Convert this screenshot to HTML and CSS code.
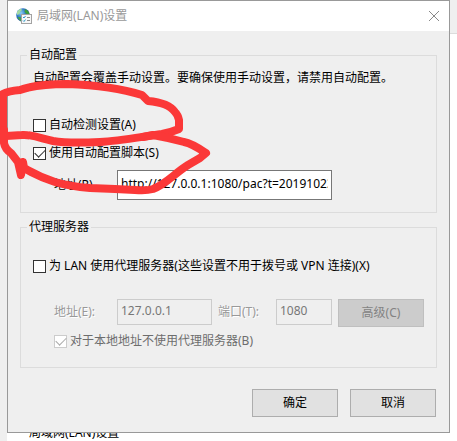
FILE: index.html
```html
<!DOCTYPE html>
<html lang="zh-CN">
  <head>
    <meta charset="UTF-8" />
    <meta name="viewport" content="width=device-width, initial-scale=1.0" />
    <title>局域网(LAN)设置</title>
    <link rel="stylesheet" href="styles.css">
  </head>
  <body>
    <div class="parent-window">
      <span>局域网(LAN)设置</span>
    </div>

    <main class="dialog">
      <header class="titlebar">
        <svg class="app-icon" width="16" height="16" viewBox="0 0 16 16">
          <defs>
            <radialGradient id="globe" cx="35%" cy="35%" r="70%">
              <stop offset="0" stop-color="#8fd0f2" />
              <stop offset="0.5" stop-color="#2f78c4" />
              <stop offset="1" stop-color="#153f86" />
            </radialGradient>
          </defs>
          <circle cx="7" cy="7" r="6.8" fill="url(#globe)" />
          <path d="M1 4 Q2 1.500 5 .8 L6 2 L4 4 L3.500 6 L1 7Z" fill="#a5dba0" />
          <path d="M9 1 Q13 3 13.500 6 L10.500 6 L8.500 4Z" fill="#3d9e3c" />
          <path d="M1.500 9 L4.500 9 L5.500 13.500 Q3 12.500 1.500 9Z" fill="#45a345" />
          <rect x="5.500" y="6.500" width="10" height="9" fill="#f7f7f7" stroke="#a3a3a3" />
          <path d="M7 9 L8 10 L9.500 8 M7 12.500 L8 13.500 L9.500 11.500" fill="none" stroke="#2c9bd0" />
          <path d="M11 9.500 H14 M11 12.500 H14" stroke="#8c8c8c" />
        </svg>
        <h1>局域网(LAN)设置</h1>
        <button class="close" type="button" aria-label="关闭">
          <svg width="12" height="12" viewBox="0 0 12 12">
            <path d="M1 1 L11 11 M11 1 L1 11" stroke="#8a8a8a" fill="none" />
          </svg>
        </button>
      </header>

      <form class="content">
        <fieldset class="group auto-group">
          <legend>自动配置</legend>
          <p>自动配置会覆盖手动设置。要确保使用手动设置，请禁用自动配置。</p>
          <label class="check"><input type="checkbox" />自动检测设置(A)</label>
          <label class="check"><input type="checkbox" checked />使用自动配置脚本(S)</label>
          <div class="row script-row">
            <label class="address-label" for="script-address">地址(R)</label>
            <input class="script-address" type="text" id="script-address" value="http://127.0.0.1:1080/pac?t=20191023" />
          </div>
        </fieldset>

        <fieldset class="group proxy-group">
          <legend>代理服务器</legend>
          <label class="check"><input type="checkbox" />为 LAN 使用代理服务器(这些设置不用于拨号或 VPN 连接)(X)</label>
          <div class="row proxy-row">
            <label class="address-label disabled" for="proxy-address">地址(E):</label>
            <input class="proxy-address" type="text" id="proxy-address" value="127.0.0.1" disabled />
            <label class="port-label disabled" for="proxy-port">端口(T):</label>
            <input class="proxy-port" type="text" id="proxy-port" value="1080" disabled />
            <button class="advanced" type="button" disabled>高级(C)</button>
          </div>
          <label class="check bypass"><input type="checkbox" checked disabled />对于本地地址不使用代理服务器(B)</label>
        </fieldset>

        <div class="actions">
          <button type="submit">确定</button>
          <button type="button">取消</button>
        </div>
      </form>

      <!-- red marker strokes -->
      <svg class="marker" width="220" height="120" viewBox="0 80 220 120">
        <path d="M3 130 L3 94 Q8 91 20 90 C34 85 50 84 67 84 C94 85 120 88 142 95 L148 101 C160 102 170 105 175 112 Q178 115 179 120 L179 129 Q172 132 162 134 C140 137 120 141 100 142 C80 143 65 143 53 141 C40 138 30 134 22 135 L6 136" />
        <path d="M4 130 L4 143 Q5 149 11 153 L18 162 L21 175 L23 162 L24 168 C34 174 43 178 55 182 C65 185 77 187 90 188 L115 189 L135 190 Q146 191 153 189 C166 184 175 173 188 165 L200 158 L206 153 C200 149 190 143 184 142 Q170 138 153 135 L143 137" />
      </svg>
    </main>
  </body>
</html>
```
FILE: styles.css
```css
* {
  box-sizing: border-box;
}

body {
  position: relative;
  min-height: 100vh;
  margin: 0;
  padding: 0 7px;
  background-color: #efefef;
  color: #000;
  font-family: "Noto Sans", "Noto Sans CJK SC", sans-serif;
  font-size: 12px;
  line-height: 16px;
  overflow: hidden;
}

/* window behind the dialog */
.parent-window {
  position: absolute;
  top: 33px;
  right: 0;
  bottom: 0;
  left: 7px;
  display: flex;
  align-items: flex-end;
  padding-left: 22px;
  border-top: 1px solid #dcdcdc;
  background-color: #fff;
}

.dialog {
  position: relative;
  border: 1px solid #999;
  background-color: #efefef;
}

.titlebar {
  display: flex;
  align-items: center;
  height: 30px;
  padding: 0 8px;
  background-color: #fff;
}

.titlebar h1 {
  flex: 1;
  margin: 0 0 0 5px;
  color: #999;
  font-size: 12px;
  font-weight: normal;
}

.close {
  display: flex;
  padding: 1px;
  border: none;
  background: none;
}

.content {
  padding: 16px 12px 15px;
}

.group {
  min-width: 0;
  margin: 0;
  padding: 0 12px;
  border: 1px solid #dcdcdc;
}

.group legend {
  margin-left: -6px;
  padding: 0 2px;
}

.group p {
  margin: 7px 0 31px;
  white-space: nowrap;
}

.auto-group {
  padding-bottom: 12px;
}

.proxy-group {
  margin-top: 6px;
  padding-bottom: 18px;
}

.check {
  display: flex;
  align-items: center;
  margin-bottom: 12px;
  white-space: nowrap;
}

.check input {
  display: grid;
  place-items: center;
  flex: none;
  width: 13px;
  height: 13px;
  margin: 0 3px 0 0;
  border: 1px solid #333;
  background-color: #fff;
  appearance: none;
}

.check input:checked::before {
  content: "";
  width: 9px;
  height: 5px;
  margin-top: -3px;
  border: solid #333;
  border-width: 0 0 1px 1px;
  transform: rotate(-45deg);
}

.check input:disabled {
  border-color: #ccc;
}

.check input:disabled::before {
  border-color: #aaa;
}

.row {
  display: flex;
  align-items: center;
}

.address-label {
  flex: none;
  width: 63px;
}

.disabled {
  color: #999;
  text-shadow: 1px 1px 0 #fff;
}

input[type="text"] {
  height: 26px;
  padding: 0 3px 2px;
  border: 1px solid #ccc;
  background-color: #efefef;
  color: #777;
  font: inherit;
}

input.script-address[type="text"] {
  width: 215px;
  height: 30px;
  padding-bottom: 4px;
  border-color: #777;
  background-color: #fff;
  color: #000;
}

.script-row {
  margin-top: -3px;
  padding-left: 21px;
}

.proxy-group > .check:first-of-type {
  margin-top: 23px;
  margin-bottom: 22px;
}

.proxy-row {
  padding-left: 21px;
}

.proxy-address {
  width: 95px;
}

.port-label {
  flex: none;
  width: 64px;
  padding-left: 6px;
}

.proxy-port {
  width: 56px;
}

button {
  color: #000;
  font: inherit;
}

.advanced,
.actions button {
  width: 86px;
  height: 28px;
  padding: 0;
  border: 1px solid #adadad;
  background-color: #e1e1e1;
}

.advanced {
  margin: 3px 0 0 6px;
}

.advanced:disabled {
  border-color: #bfbfbf;
  background-color: #ccc;
  color: #838383;
}

.bypass {
  margin: 6px 0 0 21px;
  color: #6d6d6d;
}

.actions {
  display: flex;
  justify-content: flex-end;
  gap: 12px;
  margin: 21px 1px 0 0;
}

.marker {
  position: absolute;
  top: 79px;
  left: -8px;
  fill: none;
  stroke: #fb3838;
  stroke-width: 8px;
  stroke-linecap: round;
  stroke-linejoin: round;
  pointer-events: none;
}
```
